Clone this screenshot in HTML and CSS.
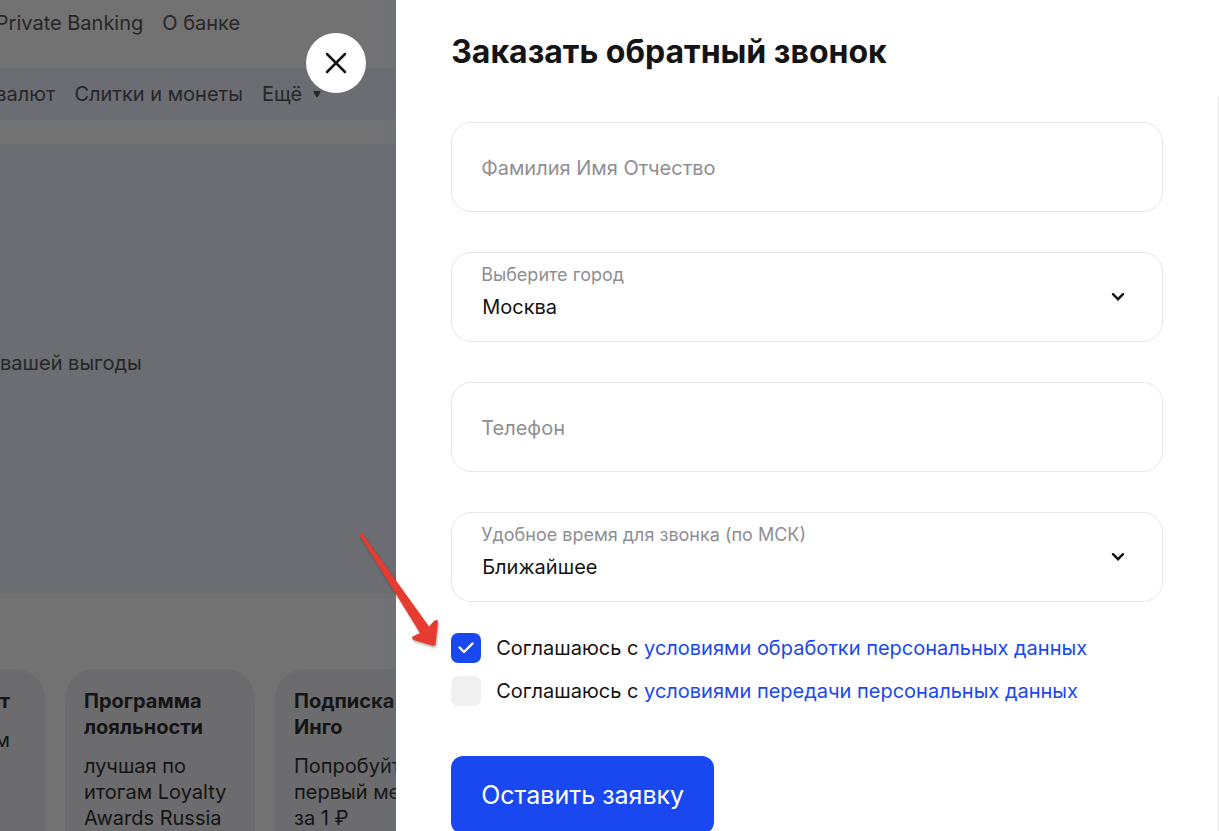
FILE: index.html
```html
<!DOCTYPE html>
<html lang="ru">
<head>
    <meta charset="UTF-8">
    <meta name="viewport" content="width=device-width, initial-scale=1.0">
    <title>Заказать обратный звонок</title>
    <link rel="stylesheet" href="styles.css">
</head>
<body>

    <div class="layout">
        <main class="page">
            <nav class="nav nav-top">
                <a href="#">Private Banking</a>
                <a href="#">О банке</a>
            </nav>
            <nav class="nav nav-sub">
                <a href="#">валют</a>
                <a href="#">Слитки и монеты</a>
                <a href="#" class="more">Ещё
                    <svg width="8" height="8" viewBox="0 0 8 8"><path d="M1.4 2h5.200L4 6.200z" fill="#444" stroke="#444" stroke-width="1.8" stroke-linejoin="round"/></svg>
                </a>
            </nav>
            <section class="hero">
                <p>вашей выгоды</p>
            </section>
            <section class="cards">
                <article class="card card-cut">
                    <h3>т</h3>
                    <p>м</p>
                </article>
                <article class="card">
                    <h3>Программа лояльности</h3>
                    <p>лучшая по итогам Loyalty Awards Russia</p>
                </article>
                <article class="card">
                    <h3>Подписка Инго</h3>
                    <p>Попробуйте первый месяц за&nbsp;1&nbsp;₽</p>
                </article>
            </section>
            <div class="overlay"></div>
        </main>

        <aside class="drawer">
            <button class="close" type="button" aria-label="Закрыть">
                <svg width="22" height="22" viewBox="0 0 22 22"><path d="M2 2l18 18M20 2L2 20" stroke="#141414" stroke-width="2.500" stroke-linecap="round"/></svg>
            </button>

            <header class="drawer-head">
                <h2>Заказать обратный звонок</h2>
            </header>

            <form class="drawer-body">
                <div class="field">
                    <input type="text" id="fio" placeholder="Фамилия Имя Отчество" aria-label="Фамилия Имя Отчество">
                </div>

                <div class="field">
                    <label for="city">Выберите город</label>
                    <select id="city">
                        <option>Москва</option>
                    </select>
                    <svg class="chevron" width="14" height="10" viewBox="0 0 14 10"><path d="M2 2.2l5 5 5-5" fill="none" stroke="#141414" stroke-width="2.4" stroke-linecap="round"/></svg>
                </div>

                <div class="field">
                    <input type="tel" id="phone" placeholder="Телефон" aria-label="Телефон">
                </div>

                <div class="field">
                    <label for="time">Удобное время для звонка (по МСК)</label>
                    <select id="time">
                        <option>Ближайшее</option>
                    </select>
                    <svg class="chevron" width="14" height="10" viewBox="0 0 14 10"><path d="M2 2.2l5 5 5-5" fill="none" stroke="#141414" stroke-width="2.4" stroke-linecap="round"/></svg>
                </div>

                <div class="agreements">
                    <div class="agree">
                        <input type="checkbox" id="agreeProcessing" checked>
                        <svg class="tick" width="30" height="30" viewBox="0 0 30 30"><path d="M8.500 14.500l4.500 4.500 8.500-8.500" fill="none" stroke="#fff" stroke-width="2.4" stroke-linecap="round" stroke-linejoin="round"/></svg>
                        <label for="agreeProcessing">Соглашаюсь с <a href="#">условиями обработки персональных данных</a></label>
                    </div>
                    <div class="agree">
                        <input type="checkbox" id="agreeTransfer">
                        <label for="agreeTransfer">Соглашаюсь с <a href="#">условиями передачи персональных данных</a></label>
                    </div>
                    <svg class="arrow" width="90" height="120" viewBox="0 0 90 120">
                        <path d="M9.500 5Q11 2.500 13 4.500L79 96.500L84 91Q88 88.500 88 92L85.500 114.500Q84.500 116 82 115.500L63.500 110Q60.500 107.500 63.500 106L70 103Z" fill="#e73b2f"/>
                    </svg>
                </div>

                <button class="submit" type="submit">Оставить заявку</button>
            </form>
        </aside>
    </div>

</body>
</html>
```
FILE: styles.css
```css
* { box-sizing: border-box; }
body { margin: 0; font-family: Inter, "Noto Sans", sans-serif; font-size: 20px; line-height: 26px; color: #141414; }
h2, h3, p { margin: 0; }
a { text-decoration: none; }
input, select, button { font: inherit; color: inherit; }

.layout { display: grid; grid-template-columns: 13fr 27fr; height: 100vh; overflow: hidden; }

/* dimmed page behind the drawer */
.page { position: relative; min-width: 0; overflow: hidden; background: #fff; }
.overlay { position: absolute; inset: 0; background: linear-gradient(90deg, rgba(100, 110, 130, 0) 92%, rgba(100, 110, 130, 0.12)), rgba(20, 20, 20, 0.6); }

.nav { display: flex; justify-content: flex-end; gap: 19px; white-space: nowrap; }
.nav a { color: #444; }
.nav-top { padding: 10px 156px 32px 0; }
.nav-sub { padding: 13px 75px 13px 0; background: #eff3ff; }
.more { display: flex; align-items: center; gap: 11px; }

.hero { display: flex; align-items: center; height: 450px; margin-top: 24px; padding-bottom: 12px; background: #eff3ff; color: #444; }

.cards { display: flex; gap: 20px; margin: 75px 0 0 -145px; }
.card { flex: none; width: 190px; height: 240px; padding: 19px; border-radius: 30px; background: #f0f0f4; }
.card h3 { margin-bottom: 13px; font-size: 20px; font-weight: 700; }
.card-cut { padding-right: 35px; text-align: right; }

/* drawer */
.drawer { position: relative; background: #fff; }
.close { position: absolute; top: 33px; left: -90px; display: flex; align-items: center; justify-content: center; width: 60px; height: 60px; padding: 0; border: none; border-radius: 50%; background: #fff; cursor: pointer; }
.drawer-head { height: 97px; padding: 32px 55px 0; }
.drawer-head h2 { font-size: 32px; line-height: 40px; font-weight: 700; }
.drawer-body { display: flex; flex-direction: column; gap: 40px; padding: 25px 55px 55px; border-right: 1px solid #e6e6e6; }

.field { position: relative; }
.field input, .field select { display: block; width: 100%; height: 90px; padding: 2px 29px 0; border: 1px solid #e6e6e6; border-radius: 20px; background: #fff; appearance: none; }
.field select { padding-top: 20px; padding-left: 30px; }
.field input::placeholder { color: #8e8e93; opacity: 1; }
.field label { position: absolute; top: 10px; left: 30px; font-size: 18px; color: #8e8e93; }
.chevron { position: absolute; top: 40px; right: 38px; pointer-events: none; }

.agreements { position: relative; display: flex; flex-direction: column; gap: 13px; margin: -9px 0 10px; }
.agree { position: relative; display: flex; align-items: center; gap: 15px; white-space: nowrap; }
.agree input { flex: none; width: 30px; height: 30px; margin: 0; border-radius: 7px; background: #f0f0f0; appearance: none; }
.agree input:checked { background: #1a48f0; }
.agree a { color: #1a48f0; }
.tick { position: absolute; top: 0; left: 0; pointer-events: none; }
.arrow { position: absolute; top: -103px; left: -101px; filter: drop-shadow(1px 2px 1px rgba(0, 0, 0, 0.3)); pointer-events: none; }

.submit { align-self: flex-start; height: 78px; padding: 0 30px; border: none; border-radius: 12px; background: #1a48f0; color: #fff; font-size: 25px; cursor: pointer; }
```
